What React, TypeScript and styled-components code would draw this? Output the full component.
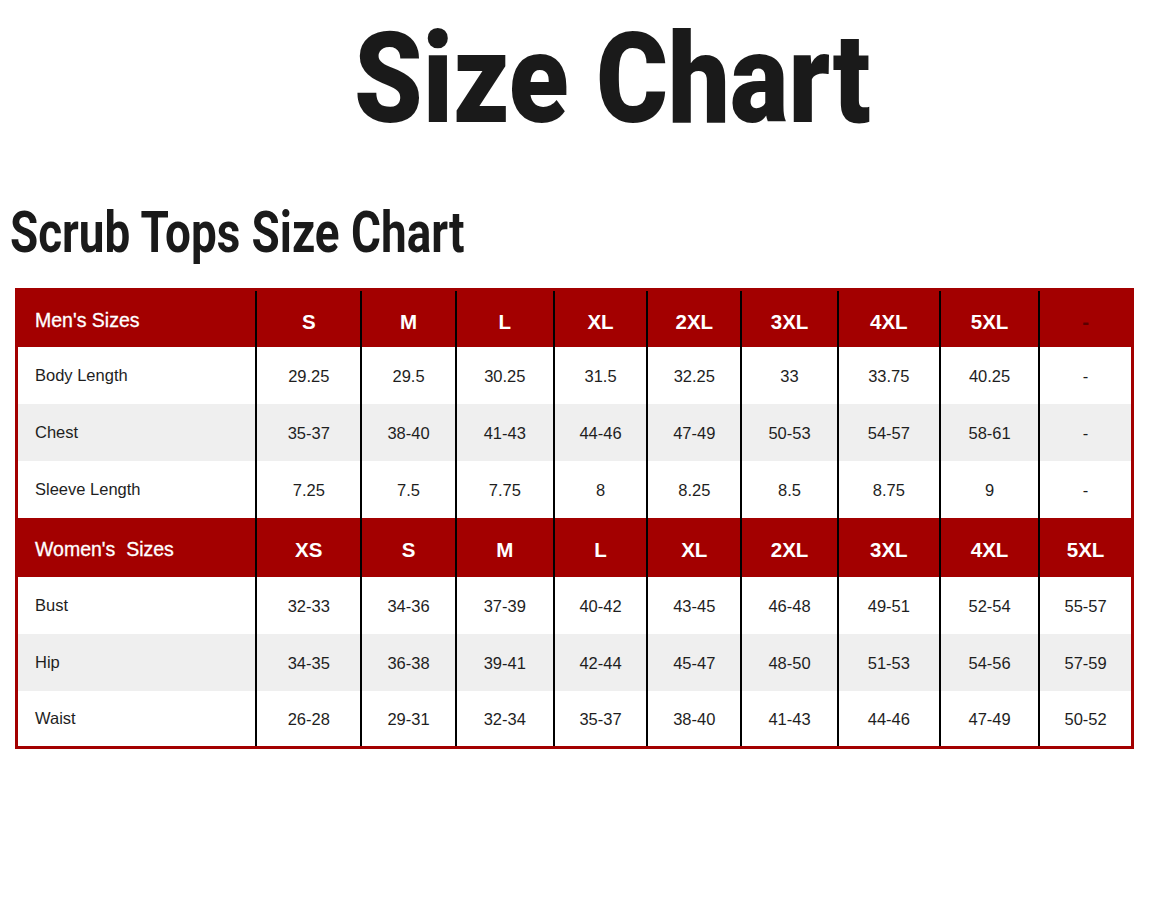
import styled, { createGlobalStyle } from "styled-components";

const GlobalStyle = createGlobalStyle`
  html, body {
    margin: 0;
    padding: 0;
    background: #ffffff;
  }
  body {
    font-family: "Liberation Sans", Arial, sans-serif;
    color: #1b1b1b;
  }
`;

const Page = styled.div`
  width: 1150px;
  height: 921px;
  background: #ffffff;
  display: flex;
  flex-direction: column;
`;

const Banner = styled.div`
  height: 150px;
  padding-left: 354px;
  display: flex;
  align-items: flex-start;
`;

const BigTitle = styled.h1`
  margin: 15px 0 0;
  font-family: Roboto, "Liberation Sans", sans-serif;
  font-weight: 900;
  font-size: 126px;
  line-height: 128px;
  color: #1a1a1a;
  transform: scaleX(0.872);
  transform-origin: left center;
  white-space: nowrap;
`;

const SubTitle = styled.h2`
  margin: 50px 0 0 10px;
  font-family: Roboto, "Liberation Sans", sans-serif;
  font-weight: 700;
  font-size: 58px;
  line-height: 64px;
  color: #1a1a1a;
  transform: scaleX(0.79);
  transform-origin: left center;
  white-space: nowrap;
`;

const ChartTable = styled.table`
  margin: 24px 0 0 15px;
  width: 1119px;
  border-collapse: collapse;
  table-layout: fixed;
  border: 3px solid #a30000;
`;

const Col = styled.col<{ $w: number }>`
  width: ${(p) => p.$w}px;
`;

const Row = styled.tr<{ $kind: "head" | "plain" | "shade"; $tall?: boolean }>`
  height: ${(p) => (p.$tall ? 59 : 57)}px;
  background: ${(p) =>
    p.$kind === "head" ? "#a30000" : p.$kind === "shade" ? "#efefef" : "#ffffff"};
`;

const LabelCell = styled.td<{ $head?: boolean }>`
  padding: 0 0 0 17px;
  text-align: left;
  font-size: ${(p) => (p.$head ? "19.5px" : "16.5px")};
  color: ${(p) => (p.$head ? "#ffffff" : "#1e1e1e")};
  -webkit-text-stroke: ${(p) => (p.$head ? "0.3px #ffffff" : "0")};
  white-space: pre;
  border-right: 2px solid #000000;
  padding-top: ${(p) => (p.$head ? "4px" : "0")};
`;

const ValueCell = styled.td<{ $head?: boolean; $last?: boolean; $muted?: boolean }>`
  padding: 0;
  text-align: center;
  font-size: ${(p) => (p.$head ? "20.5px" : "16.5px")};
  font-weight: ${(p) => (p.$head ? 700 : 400)};
  color: ${(p) => (p.$muted ? "#5a0000" : p.$head ? "#ffffff" : "#1e1e1e")};
  border-right: ${(p) => (p.$last ? "none" : "2px solid #000000")};
  padding-top: ${(p) => (p.$head ? "6px" : "2px")};
`;

const widths = [239, 105, 94, 98, 93, 94, 96, 102, 99, 93];

type Block = {
  title: string;
  tall: boolean;
  sizes: string[];
  rows: { label: string; values: string[] }[];
};

const blocks: Block[] = [
  {
    title: "Men's Sizes",
    tall: false,
    sizes: ["S", "M", "L", "XL", "2XL", "3XL", "4XL", "5XL", "-"],
    rows: [
      {
        label: "Body Length",
        values: ["29.25", "29.5", "30.25", "31.5", "32.25", "33", "33.75", "40.25", "-"],
      },
      {
        label: "Chest",
        values: ["35-37", "38-40", "41-43", "44-46", "47-49", "50-53", "54-57", "58-61", "-"],
      },
      {
        label: "Sleeve Length",
        values: ["7.25", "7.5", "7.75", "8", "8.25", "8.5", "8.75", "9", "-"],
      },
    ],
  },
  {
    title: "Women's  Sizes",
    tall: true,
    sizes: ["XS", "S", "M", "L", "XL", "2XL", "3XL", "4XL", "5XL"],
    rows: [
      {
        label: "Bust",
        values: ["32-33", "34-36", "37-39", "40-42", "43-45", "46-48", "49-51", "52-54", "55-57"],
      },
      {
        label: "Hip",
        values: ["34-35", "36-38", "39-41", "42-44", "45-47", "48-50", "51-53", "54-56", "57-59"],
      },
      {
        label: "Waist",
        values: ["26-28", "29-31", "32-34", "35-37", "38-40", "41-43", "44-46", "47-49", "50-52"],
      },
    ],
  },
];

export default function App() {
  return (
    <Page>
      <GlobalStyle />
      <Banner>
        <BigTitle>Size Chart</BigTitle>
      </Banner>
      <SubTitle>Scrub Tops Size Chart</SubTitle>
      <ChartTable>
        <colgroup>
          {widths.map((w, i) => (
            <Col key={i} $w={w} />
          ))}
        </colgroup>
        <tbody>
          {blocks.map((b) => [
            <Row key={b.title} $kind="head" $tall={b.tall}>
              <LabelCell $head>{b.title}</LabelCell>
              {b.sizes.map((s, i) => (
                <ValueCell
                  key={i}
                  $head
                  $last={i === b.sizes.length - 1}
                  $muted={s === "-"}
                >
                  {s}
                </ValueCell>
              ))}
            </Row>,
            ...b.rows.map((r, ri) => (
              <Row key={b.title + r.label} $kind={ri === 1 ? "shade" : "plain"}>
                <LabelCell>{r.label}</LabelCell>
                {r.values.map((v, i) => (
                  <ValueCell key={i} $last={i === r.values.length - 1}>
                    {v}
                  </ValueCell>
                ))}
              </Row>
            )),
          ])}
        </tbody>
      </ChartTable>
    </Page>
  );
}
